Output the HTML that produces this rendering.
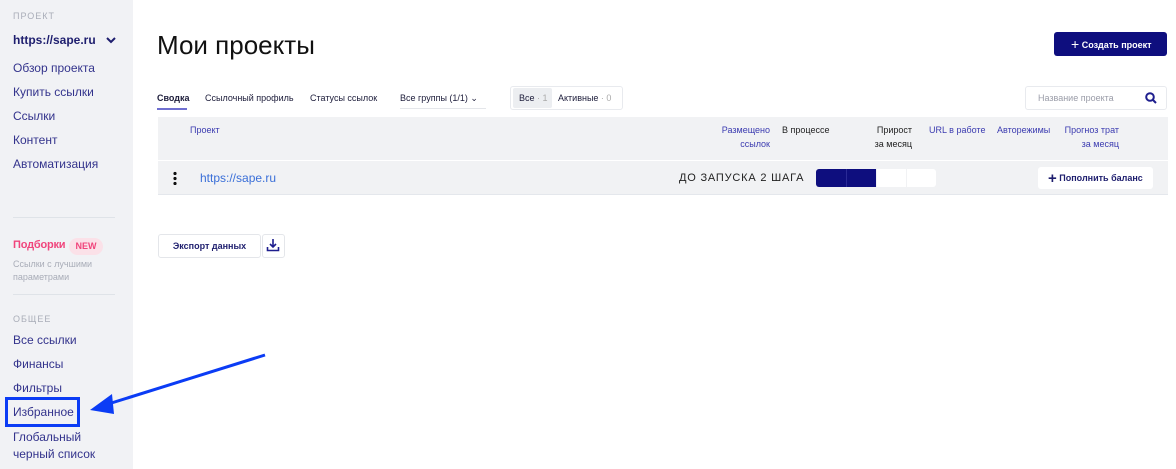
<!DOCTYPE html><html><head><meta charset="utf-8"><style>
*{margin:0;padding:0;box-sizing:border-box}
body{width:1176px;height:469px;overflow:hidden;background:#fff;font-family:"Liberation Sans",sans-serif;position:relative;color:#1c1c3a}
.a{position:absolute;white-space:nowrap}
.sb{position:absolute;left:0;top:0;width:133px;height:469px;background:#f1f2f5}
.nav{color:#33338c;font-size:12px}
.cap{color:#a9adb8;font-size:9px;letter-spacing:1px}
.hd{color:#3b3bb0;font-size:9px;text-align:right;line-height:14px}
</style></head><body>
<div class="sb"></div>
<div class="a cap" style="left:13px;top:11px">ПРОЕКТ</div>
<div class="a" style="left:13px;top:33px;font-size:12px;font-weight:bold;color:#1e1e6e">https://sape.ru</div>
<svg class="a" style="left:106px;top:36px" width="10" height="8"><path d="M1 2l4 4 4-4" stroke="#1e1e6e" stroke-width="2" fill="none"/></svg>
<div class="a nav" style="left:13px;top:61px">Обзор проекта</div>
<div class="a nav" style="left:13px;top:85px">Купить ссылки</div>
<div class="a nav" style="left:13px;top:109px">Ссылки</div>
<div class="a nav" style="left:13px;top:133px">Контент</div>
<div class="a nav" style="left:13px;top:157px">Автоматизация</div>
<div class="a" style="left:13px;top:217px;width:102px;height:1px;background:#dfe3e8"></div>
<div class="a" style="left:13px;top:239px;font-size:11px;font-weight:bold;color:#f0457c;letter-spacing:-0.2px">Подборки</div>
<div class="a" style="left:69px;top:238px;width:34px;height:17px;border-radius:9px;background:#fbe1e8;color:#f0457c;font-size:9px;font-weight:bold;text-align:center;line-height:17px">NEW</div>
<div class="a" style="left:13px;top:258px;font-size:9px;color:#a9adb8;line-height:13px">Ссылки с лучшими<br>параметрами</div>
<div class="a" style="left:13px;top:294px;width:102px;height:1px;background:#dfe3e8"></div>
<div class="a cap" style="left:13px;top:314px">ОБЩЕЕ</div>
<div class="a nav" style="left:13px;top:333px">Все ссылки</div>
<div class="a nav" style="left:13px;top:357px">Финансы</div>
<div class="a nav" style="left:13px;top:381px">Фильтры</div>
<div class="a nav" style="left:13px;top:405px">Избранное</div>
<div class="a" style="left:5px;top:397px;width:75px;height:30px;border:3px solid #0b3cf5"></div>
<div class="a nav" style="left:13px;top:429px;line-height:17px">Глобальный<br>черный список</div>
<svg class="a" style="left:0;top:0" width="300" height="469"><line x1="265" y1="355" x2="105" y2="405" stroke="#0b3cf5" stroke-width="3"/><path d="M90 410 L112 394 L114 414 Z" fill="#0b3cf5"/></svg>

<div class="a" style="left:157px;top:30px;font-size:26px;color:#111">Мои проекты</div>
<div class="a" style="left:1054px;top:32px;width:113px;height:24px;background:#0e0e7e;border-radius:3px;color:#fff;font-size:9px;font-weight:bold;line-height:24px;padding-left:17px"><span style="font-size:14px;font-weight:normal;vertical-align:-1px">+</span> Создать проект</div>

<div class="a" style="left:157px;top:93px;font-size:9px;font-weight:bold">Сводка</div>
<div class="a" style="left:157px;top:108px;width:30px;height:2px;background:#6f6fd0"></div>
<div class="a" style="left:205px;top:93px;font-size:9px">Ссылочный профиль</div>
<div class="a" style="left:310px;top:93px;font-size:9px">Статусы ссылок</div>
<div class="a" style="left:400px;top:93px;font-size:9px">Все группы (1/1) ⌄</div>
<div class="a" style="left:400px;top:108px;width:86px;height:1px;background:#e4e6ea"></div>
<div class="a" style="left:510px;top:86px;width:113px;height:24px;border:1px solid #e8eaee;border-radius:3px"></div>
<div class="a" style="left:513px;top:88px;width:39px;height:20px;background:#eceef1;border-radius:2px"></div>
<div class="a" style="left:519px;top:93px;font-size:9px">Все <span style="color:#aaa">· 1</span></div>
<div class="a" style="left:558px;top:93px;font-size:9px">Активные <span style="color:#aaa">· 0</span></div>
<div class="a" style="left:1025px;top:86px;width:142px;height:24px;border:1px solid #e8eaee;border-radius:3px;font-size:9px;color:#9a9ca8;line-height:22px;padding-left:12px">Название проекта</div>
<svg class="a" style="left:1145px;top:92px" width="12" height="12"><circle cx="5" cy="5" r="3.8" stroke="#1e1e8e" stroke-width="2" fill="none"/><line x1="8" y1="8" x2="11" y2="11" stroke="#1e1e8e" stroke-width="2"/></svg>

<div class="a" style="left:158px;top:117px;width:1010px;height:43px;background:#f1f2f4"></div>
<div class="a" style="left:158px;top:161px;width:1010px;height:33px;background:#f1f2f4"></div>
<div class="a" style="left:158px;top:194px;width:1010px;height:1px;background:#e4e7ec"></div>
<div class="a hd" style="left:190px;top:123px">Проект</div>
<div class="a hd" style="left:700px;top:123px;width:70px">Размещено<br>ссылок</div>
<div class="a hd" style="left:782px;top:123px;color:#222;text-align:left">В процессе</div>
<div class="a hd" style="left:840px;top:123px;width:72px;color:#222">Прирост<br>за месяц</div>
<div class="a hd" style="left:929px;top:123px">URL в работе</div>
<div class="a hd" style="left:997px;top:123px">Авторежимы</div>
<div class="a hd" style="left:1050px;top:123px;width:69px">Прогноз трат<br>за месяц</div>
<div class="a" style="left:173px;top:171px;width:4px;height:14px;background:radial-gradient(circle,#111 1.6px,transparent 1.8px) 0 0/4px 5px"></div>
<div class="a" style="left:200px;top:171px;font-size:12px;color:#3a6fd8">https://sape.ru</div>
<div class="a" style="left:679px;top:172px;font-size:11px;letter-spacing:0.8px;color:#222">ДО ЗАПУСКА 2 ШАГА</div>
<div class="a" style="left:816px;top:169px;width:60px;height:18px;background:#0e0e7e;border-radius:3px 0 0 3px"></div>
<div class="a" style="left:846px;top:169px;width:1px;height:18px;background:#2a2a96"></div>
<div class="a" style="left:877px;top:169px;width:29px;height:18px;background:#fff"></div>
<div class="a" style="left:907px;top:169px;width:29px;height:18px;background:#fff;border-radius:0 3px 3px 0"></div>
<div class="a" style="left:1038px;top:167px;width:115px;height:22px;background:#fff;border-radius:3px;font-size:9px;font-weight:bold;color:#1e1e6e;line-height:22px;padding-left:10px"><span style="font-size:15px;vertical-align:-2px">+</span> Пополнить баланс</div>

<div class="a" style="left:158px;top:234px;width:103px;height:24px;border:1px solid #e4e6ea;border-radius:3px;font-size:9px;font-weight:bold;color:#1e1e6e;text-align:center;line-height:22px">Экспорт данных</div>
<div class="a" style="left:262px;top:234px;width:23px;height:24px;border:1px solid #e4e6ea;border-radius:3px"></div>
<svg class="a" style="left:266px;top:238px" width="14" height="14"><path d="M7 1v8M4 6l3 3 3-3M1.5 9v3.5h11V9" stroke="#1e1e8e" stroke-width="1.6" fill="none"/></svg>
</body></html>
